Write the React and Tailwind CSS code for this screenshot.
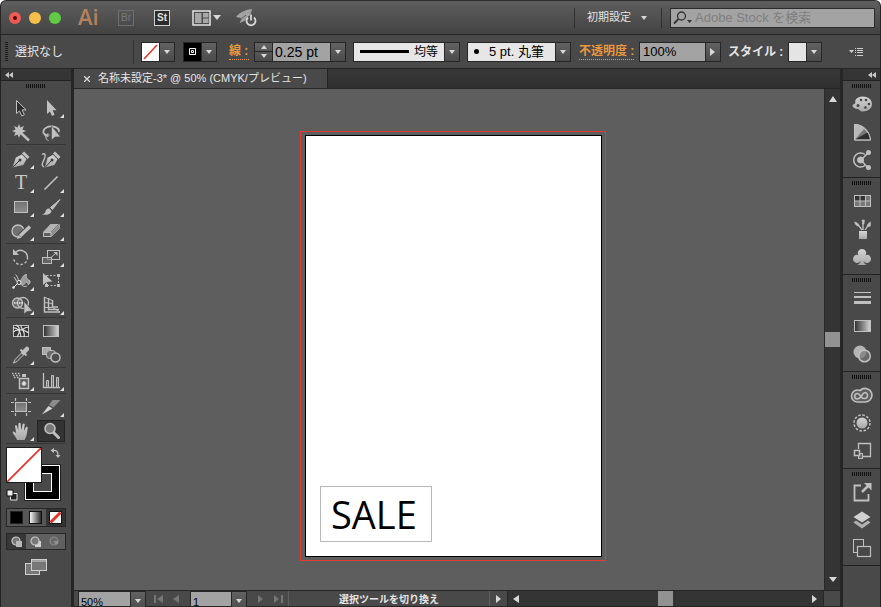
import clsx from "clsx";

const Shades = () => (
  <svg width="0" height="0" className="absolute" aria-hidden="true">
    <defs>
      <linearGradient id="fade">
        <stop offset="0" stopColor="#2e2e2e" />
        <stop offset="1" stopColor="#d6d6d6" />
      </linearGradient>
      <linearGradient id="fadeLight">
        <stop offset="0" stopColor="#ffffff" />
        <stop offset="1" stopColor="#222222" />
      </linearGradient>
      <linearGradient id="plate" x2="0" y2="1">
        <stop offset="0" stopColor="#727272" />
        <stop offset="1" stopColor="#8e8e8e" />
      </linearGradient>
      <linearGradient id="metal" x2="0" y2="1">
        <stop offset="0" stopColor="#d4d4d4" />
        <stop offset="1" stopColor="#a8a8a8" />
      </linearGradient>
    </defs>
  </svg>
);

const L = "#c0c0c0";

// every tool glyph is drawn on a 30x24 cell
const toolGroups = [
  [
    {
      name: "選択ツール",
      art: <path d="M10.500 4.500v13l3-2.600 2.200 5 2.600-1.200-2.200-4.800h4z" fill="#2c2c2c" />,
    },
    {
      name: "ダイレクト選択ツール",
      more: true,
      art: <path d="M11 4v14l3-2.600 2 4.600 2.600-1.200-2-4.500h4z" fill={L} stroke="none" />,
    },
    {
      name: "自動選択ツール",
      art: (
        <>
          <path d="M13 4l1.300 3.600L18 6l-1.600 3.600L20 11l-3.600 1.400L18 16l-3.600-1.600L13 18l-1.400-3.600L8 16l1.600-3.600L6 11l3.600-1.400L8 6l3.600 1.600z" fill={L} stroke="none" />
          <path d="M15.500 13.500l7.500 7" strokeWidth="2.400" />
        </>
      ),
    },
    {
      name: "なげなわツール",
      art: (
        <>
          <path d="M12 15.500c-3.500-.6-5-2.200-4.600-4.500C8 8 12 6 16.500 6.500S24 9.500 22.500 12" strokeWidth="1.800" />
          <path d="M9 14c-1 2 1 3.500 3 2.500s1-3-1-2.500M10 16.500c-.5 2 .5 3.500 2.500 4" />
          <path d="M15.500 6v14l3.500-3 5.500-.2z" fill={L} stroke="#444" strokeWidth="0.500" />
        </>
      ),
    },
  ],
  [
    {
      name: "ペンツール",
      more: true,
      art: (
        <>
          <path d="M6.500 20.500l3.300-10 6-3 4.700 4.800-3.200 5.700z" fill="url(#metal)" stroke="none" />
          <path d="M17 5.500l5.500 5.500" strokeWidth="3" />
          <path d="M7 20l6.500-6.500" stroke="#3a3a3a" />
          <circle cx="14" cy="13" r="1.500" fill="#3a3a3a" stroke="none" />
        </>
      ),
    },
    {
      name: "曲線ツール",
      art: (
        <>
          <path d="M9 20.500l2.500-9.800 5.500-3 4.500 4.600-3 5.700z" fill="url(#metal)" stroke="none" />
          <path d="M18 5.500l5.500 5.500" strokeWidth="3" />
          <path d="M9.500 20l6-6.500" stroke="#3a3a3a" />
          <circle cx="16" cy="13" r="1.500" fill="#3a3a3a" stroke="none" />
          <path d="M6 7.500c3-2 4 .5 2.500 4s-4 7-.5 8.500" strokeWidth="1.400" />
        </>
      ),
    },
    {
      name: "文字ツール",
      more: true,
      art: (
        <text x="15" y="18" textAnchor="middle" fill="#c8c8c8" stroke="none" className="font-['Liberation_Serif',serif] text-[20px]">
          T
        </text>
      ),
    },
    { name: "直線ツール", more: true, art: <path d="M8.500 18.500l13-13" strokeWidth="1.600" /> },
    {
      name: "長方形ツール",
      more: true,
      art: <rect x="8.500" y="6.500" width="13" height="11" fill="url(#plate)" />,
    },
    {
      name: "ブラシツール",
      more: true,
      art: (
        <>
          <path d="M24 4.500l-9.500 8 2 2z" fill={L} stroke={L} />
          <path d="M13.500 13.500c-2.500-.5-3.500 1-4 3-.5 1.500-1.500 2.500-3.500 3 4 1 9 0 9.500-3.500z" fill={L} stroke="none" />
        </>
      ),
    },
    {
      name: "Shaper ツール",
      more: true,
      art: (
        <>
          <circle cx="12" cy="12" r="6" fill="#707070" strokeWidth="1.400" />
          <path d="M13.500 17.500l9.500-9" stroke="#484848" strokeWidth="5.500" />
          <path d="M14 17l10-9.500" strokeWidth="3.400" />
          <path d="M11 20l1.500-4 2.800 2.800z" fill={L} stroke="none" />
        </>
      ),
    },
    {
      name: "消しゴムツール",
      more: true,
      art: (
        <>
          <path d="M14.500 5h8.500l-8 8H7z" fill="#b2b2b2" stroke="none" />
          <path d="M7.500 13.500h7.500v4H7.500z" fill="#5e5e5e" stroke={L} />
          <path d="M15.500 13.500L23.500 5.500v4l-8 8z" fill="#8d8d8d" stroke={L} strokeWidth="0.600" />
        </>
      ),
    },
  ],
  [
    {
      name: "回転ツール",
      more: true,
      art: (
        <>
          <path d="M9.500 7.500a7 7 0 0 1 12 4.500" strokeWidth="1.400" />
          <path d="M21.500 12a7 7 0 0 1-14 1" strokeWidth="1.400" strokeDasharray="2.500 2" />
          <path d="M7 4v6h6z" fill={L} stroke="none" />
        </>
      ),
    },
    {
      name: "拡大・縮小ツール",
      more: true,
      art: (
        <>
          <rect x="11.500" y="5.500" width="12" height="9" />
          <rect x="6.500" y="12.500" width="9" height="6" fill="#757575" fillOpacity="0.600" />
          <path d="M15 12.500l5-4.500" />
          <path d="M21.500 7v4L17.500 7z" fill={L} stroke="none" />
        </>
      ),
    },
    {
      name: "線幅ツール",
      more: true,
      art: (
        <>
          <path d="M9.500 5.500c2.500 2 2 4.500 4 7M8 8c2 3 2.500 5 5 5.500M13.500 12c3-1 3-6.500 7-6.500-1 3 1 5 3.500 6.500.5 2-1 3.500-2 3.500 0-2-1.500-3-2.500-1.500-1.500 2-4 2-6-.5z" fill="#999" />
          <path d="M7.500 18.500L12 14" stroke="#eeeeee" />
          <circle cx="7.500" cy="18.500" r="1.200" fill="#eee" stroke="none" />
          <circle cx="13" cy="13.500" r="2" fill="#444" stroke="#f0f0f0" />
          <path d="M14.500 15c1.500 2 4 3 6.500 2" />
        </>
      ),
    },
    {
      name: "自由変形ツール",
      art: (
        <>
          <rect x="10.500" y="6.500" width="12" height="10" strokeDasharray="2 1.500" />
          <path d="M21 5h3v3h-3zM21 15h3v3h-3zM9 15h3v3H9z" fill={L} stroke="none" />
          <path d="M7 4v12l3.500-3 6-.5z" fill={L} stroke="none" />
        </>
      ),
    },
    {
      name: "シェイプ形成ツール",
      more: true,
      art: (
        <>
          <circle cx="11.500" cy="10" r="5" fill="#6c6c6c" strokeWidth="1.300" />
          <circle cx="17" cy="10" r="5.500" strokeWidth="1.300" />
          <path d="M8 10h11" stroke="#eeeeee" strokeDasharray="1.500 1" strokeWidth="1.500" />
          <path d="M18 8.500V21l3-2.500 5.500-.5z" fill={L} stroke="#444" strokeWidth="0.500" />
        </>
      ),
    },
    {
      name: "遠近グリッドツール",
      more: true,
      art: (
        <>
          <path d="M8.500 4v15H24M12.500 5v11.500H23M16.500 7v7H22" strokeWidth="1.500" />
          <path d="M8 4l8.500 3.500M8 9.500l8.500 1M8 14.500h8.500L24 19" />
        </>
      ),
    },
  ],
  [
    {
      name: "メッシュツール",
      art: (
        <>
          <rect x="7.500" y="6.500" width="15" height="11" fill="#353535" />
          <path d="M10 6c4 2 5 6 1 12M7 13c5-4 10-3 16 1M15 6c-1 4 5 6 3 12M7 9c5-1 8 5 8 9M16 11c2-2 4-3 7-3" stroke="#dddddd" strokeWidth="1.200" />
        </>
      ),
    },
    {
      name: "グラデーションツール",
      art: <rect x="7.500" y="6.500" width="15" height="11" fill="url(#fade)" />,
    },
    {
      name: "スポイトツール",
      more: true,
      art: (
        <>
          <path d="M16.500 9L9 16.500 7.500 20l3.500-1.500 7.500-7.500" fill="#555" />
          <path d="M14.500 6.500l6 6" strokeWidth="2" />
          <path d="M17.500 9.500l3.500-3.500" strokeWidth="4.500" strokeLinecap="round" />
        </>
      ),
    },
    {
      name: "ブレンドツール",
      art: (
        <>
          <rect x="6.500" y="4.500" width="8" height="7" fill="#a8a8a8" />
          <rect x="10.500" y="7.500" width="9" height="8" rx="3" fill="#6a6a6a" />
          <circle cx="19.500" cy="14.500" r="4.500" fill="#4e4e4e" strokeWidth="1.500" />
        </>
      ),
    },
  ],
  [
    {
      name: "シンボルスプレーツール",
      more: true,
      art: (
        <>
          <rect x="13.500" y="9.500" width="9" height="10" fill="#5b5b5b" strokeWidth="1.500" />
          <path d="M16 5h4v3h-4z" fill={L} stroke="none" />
          <circle cx="18" cy="14.500" r="2" fill="#e0e0e0" />
          <path d="M6 4.500h8M7 6.500h7M8 8.500h5" strokeDasharray="1.500 1.500" strokeWidth="1.500" />
        </>
      ),
    },
    {
      name: "棒グラフツール",
      more: true,
      art: (
        <>
          <path d="M7.500 4v14.500H24" strokeWidth="1.300" />
          <path d="M10.500 11.500h2v7h-2zM15.500 6.500h2v12h-2zM20.500 8.500h2v10h-2z" fill="#777" />
        </>
      ),
    },
  ],
  [
    {
      name: "アートボードツール",
      art: (
        <>
          <rect x="9.500" y="7.500" width="11" height="9" fill="url(#plate)" />
          <path d="M9.500 3v3M20.500 3v3M9.500 18v3M20.500 18v3M5 7.500h3M22 7.500h3M5 16.500h3M22 16.500h3" strokeWidth="1.200" />
        </>
      ),
    },
    {
      name: "スライスツール",
      more: true,
      art: (
        <>
          <path d="M24.500 5h-8l-3.500 5 4.500 2.500z" fill="#8c8c8c" stroke="none" />
          <path d="M12.500 11l4 2.500L6 19.500z" fill="#d6d6d6" stroke="none" />
        </>
      ),
    },
    {
      name: "手のひらツール",
      more: true,
      art: (
        <path d="M11 21c-.5-2.500-4-5.500-4.500-8 1-1 2.500 0 3.700 1.500L9 7c.5-1.200 1.700-1 2 0l1.300 4.500.2-7c.6-1 1.800-1 2.100 0l.6 6.700 1.500-6c.6-1 1.800-.7 2 .3l-.8 6.600L20 8c.8-.8 1.800-.2 1.700.8-.5 3.700-.7 8.700-3.200 12.200z" fill="url(#metal)" stroke="none" />
      ),
    },
    {
      name: "ズームツール",
      active: true,
      art: (
        <>
          <path d="M17 13l5.500 5.500" strokeWidth="3" strokeLinecap="round" />
          <circle cx="14" cy="9.500" r="5" fill="#777" strokeWidth="1.600" />
        </>
      ),
    },
  ],
];

// 28x28 glyphs
const panelGroups = [
  [
    {
      name: "カラー",
      art: (
        <>
          <path d="M14.500 6.500c5.500 0 9.500 3 9.500 7.500s-4 7.500-9.500 7.500c-3 0-3-2.500-5-2.500s-4.500-1-5-3c-.3-1.500 1.500-2 2.500-2.500s-.5-2 .5-3.500c1-2 4-3.500 7-3.500z" fill="url(#metal)" stroke="none" />
          <circle cx="13" cy="10" r="1.300" fill="#444" stroke="none" />
          <circle cx="18" cy="10" r="1.300" fill="#444" stroke="none" />
          <circle cx="21" cy="14" r="1.300" fill="#444" stroke="none" />
          <circle cx="17.500" cy="17.500" r="1.300" fill="#444" stroke="none" />
          <circle cx="10" cy="15.500" r="1.500" fill="#444" stroke="none" />
        </>
      ),
    },
    {
      name: "カラーガイド",
      art: (
        <>
          <path d="M6.500 6.500c9 0 15 7 16 15.500h-16z" fill="#b8b8b8" />
          <path d="M7 21.500L16 11c3 2.500 5 6 6 10.500z" fill="#777" stroke="none" />
          <path d="M7 21.500l12.500-7c1.500 2 2.500 4.500 2.500 7z" fill="#2e2e2e" stroke="none" />
          <path d="M6.500 6.500c9 0 15 7 16 15.500h-16z" />
        </>
      ),
    },
    {
      name: "アセット共有",
      art: (
        <>
          <path d="M17 8.500a7 7 0 1 0 0 11" strokeWidth="1.500" />
          <circle cx="12.500" cy="14" r="3" fill={L} />
          <path d="M20 7l-7 7 7 8" strokeWidth="1.500" />
          <circle cx="20.500" cy="6.500" r="2.500" fill={L} stroke="none" />
          <circle cx="20.500" cy="21.500" r="2.500" fill={L} stroke="none" />
        </>
      ),
    },
  ],
  [
    {
      name: "スウォッチ",
      art: (
        <>
          <path d="M6 8h17v12H6z" fill={L} stroke="none" />
          <path d="M7 9h4.500v4.500H7zM12.500 9H17v4.500h-4.500z" fill="#333" stroke="none" />
          <path d="M18 9h4v4.500h-4zM7 14.500h4.500V19H7zM12.500 14.500H17V19h-4.500zM18 14.500h4V19h-4z" fill="#777" stroke="none" />
        </>
      ),
    },
    {
      name: "ブラシ",
      art: (
        <>
          <path d="M11 16h8v8h-8z" fill="url(#metal)" stroke="none" />
          <path d="M14 15L9.500 9M15 15V8M17 15l3.500-5" strokeWidth="1.300" />
          <path d="M6.500 7c2 0 4 1.500 4.500 4-2 .5-4-1.500-4.500-4zM14 5h2.500l-.5 4h-1.500zM22.500 7v4l-3.500 1c0-2.500 1.500-4 3.500-5z" fill={L} strokeWidth="0.500" />
        </>
      ),
    },
    {
      name: "シンボル",
      art: (
        <path d="M14 6a4 4 0 0 1 3.500 6.200A4 4 0 1 1 15.500 18c.3 2 1.500 3.500 3.500 4H9c2-.5 3.200-2 3.500-4a4 4 0 1 1-2-5.800A4 4 0 0 1 14 6z" fill="url(#metal)" stroke="none" />
      ),
    },
  ],
  [
    {
      name: "線",
      art: <path d="M6 8h17v1H6zM6 12h17v2H6zM6 17h17v3H6z" fill={L} stroke="none" />,
    },
    {
      name: "グラデーション",
      art: <rect x="6.500" y="8.500" width="16" height="11" fill="url(#fade)" />,
    },
    {
      name: "透明",
      art: (
        <>
          <circle cx="12" cy="12" r="6.500" fill="#b5b5b5" stroke="none" />
          <circle cx="16.500" cy="16" r="5.800" fill="#777" fillOpacity="0.700" strokeWidth="1.500" />
        </>
      ),
    },
  ],
  [
    {
      name: "CC ライブラリ",
      art: (
        <>
          <path d="M9.500 21a6 6 0 0 1 0-12c1 0 1.800.2 2.500.6A7 7 0 0 1 24 14c0 4-3 7-7 7z" fill="#5e5e5e" strokeWidth="1.600" />
          <path d="M17.500 17.500h-2c-2 0-3.500-5-6-5a2.700 2.700 0 0 0 0 5.500c1.500 0 2.500-1 3.500-2.500 1.300-2 2-4 4.500-4a3.200 3.200 0 0 1 0 6z" strokeWidth="1.600" />
        </>
      ),
    },
    {
      name: "アピアランス",
      art: (
        <>
          <circle cx="14" cy="14" r="5.500" fill="url(#metal)" stroke="none" />
          <circle cx="14" cy="14" r="8" strokeDasharray="2.500 1.700" strokeWidth="1.500" />
        </>
      ),
    },
    {
      name: "グラフィックスタイル",
      art: (
        <>
          <path d="M10.500 12V6.500h12v13H15" strokeWidth="1.300" />
          <rect x="10.500" y="16.500" width="4" height="5" fill="#666" />
          <rect x="6.500" y="13.500" width="5" height="5" fill="#444" strokeWidth="1.500" />
        </>
      ),
    },
  ],
  [
    {
      name: "書き出し",
      art: (
        <>
          <path d="M13 7.500H6.500v15h14V16" strokeWidth="1.800" />
          <path d="M14 14l6-6" strokeWidth="2.500" />
          <path d="M16 5h7.500v7.500z" fill={L} stroke="none" />
        </>
      ),
    },
    {
      name: "レイヤー",
      art: (
        <>
          <path d="M14 5.500l8.500 5.500-8.500 5.500L5.500 11z" fill="#d0d0d0" stroke="none" />
          <path d="M8 14.500L5.500 16.500 14 22.500l8.500-6-2.500-2-6 4z" fill="#b0b0b0" stroke="none" />
        </>
      ),
    },
    {
      name: "アートボード",
      art: (
        <>
          <rect x="5.500" y="5.500" width="10" height="13" />
          <rect x="9.500" y="12.500" width="13" height="10" fill="#484848" strokeWidth="1.200" />
        </>
      ),
    },
  ],
];

const Triangle = ({ dir = "down", className = "fill-[#d8d8d8]" }) => {
  const paths = {
    down: "M0 1h8L4 6z",
    up: "M0 7h8L4 1z",
    left: "M7 0v8L1 4z",
    right: "M1 0v8l5-4z",
  };
  return (
    <svg width="8" height="8" viewBox="0 0 8 8" className={className} aria-hidden="true">
      <path d={paths[dir]} />
    </svg>
  );
};

const SmallTriangle = () => (
  <svg width="6" height="4" viewBox="0 0 6 4" className="fill-[#d8d8d8]" aria-hidden="true">
    <path d="M0 0h6L3 4z" />
  </svg>
);

const Collapse = () => (
  <button type="button" aria-label="パネルを折りたたむ" className="flex h-3 items-center px-1">
    <svg width="8" height="6" viewBox="0 0 8 6" fill="#c8c8c8">
      <path d="M4 0v6L0 3zM8 0v6L4 3z" />
    </svg>
  </button>
);

const Grip = () => (
  <svg width="20" height="4" viewBox="0 0 20 4" className="mx-auto" aria-hidden="true">
    <path d="M0 2h20" stroke="#101010" strokeWidth="4" strokeDasharray="1 1" />
  </svg>
);

// a select with its arrow button laid on the right end
const Dropdown = ({ label, options, className, children }) => (
  <div className={clsx("grid shrink-0 border border-[#262626]", className)}>
    <select aria-label={label} className="min-w-0 appearance-none border-0 bg-transparent pr-4 pl-0.5 leading-4 text-black outline-none [grid-area:1/1]">
      {options.map((option) => (
        <option key={option}>{option}</option>
      ))}
    </select>
    {children}
    <span className="pointer-events-none flex w-[15px] items-center justify-center justify-self-end border-l border-[#262626] bg-linear-to-b from-[#626262] to-[#4b4b4b] [grid-area:1/1]">
      <SmallTriangle />
    </span>
  </div>
);

const SwatchButton = ({ label, children }) => (
  <button type="button" aria-label={label} className="flex h-5 w-[34px] shrink-0 border border-[#262626]">
    {children}
    <span className="flex h-full flex-1 items-center justify-center border-l border-[#262626] bg-linear-to-b from-[#626262] to-[#4b4b4b]">
      <SmallTriangle />
    </span>
  </button>
);

const AppBar = () => (
  <header className="flex h-[35px] shrink-0 items-center rounded-t-md border-x border-t border-b border-[#262626] border-t-[#2e2e2e] bg-linear-to-b from-[#5e5e5e] to-[#434343] pr-[5px] pl-2">
    <div className="flex gap-2">
      <button type="button" aria-label="閉じる" className="flex size-3 items-center justify-center rounded-full bg-[#ee5a54]">
        <span className="size-1 rounded-full bg-[#4f0a08]" />
      </button>
      <button type="button" aria-label="しまう" className="size-3 rounded-full bg-[#f6be4a]" />
      <button type="button" aria-label="拡大" className="size-3 rounded-full bg-[#62cb46]" />
    </div>
    <h1 className="ml-[17px] w-6 pb-1 font-['Open_Sans',sans-serif] text-[22px] leading-6 font-semibold text-[#b5815c]">Ai</h1>
    <button type="button" className="ml-4 size-4 border border-[#6e6e6e] text-[10px] leading-3 text-[#787878]">Br</button>
    <button type="button" className="ml-5 size-4 border border-[#d0d0d0] bg-[#2b2b2b] text-[10px] leading-3 font-bold text-[#e0e0e0]">St</button>
    <button type="button" aria-label="ドキュメントレイアウト" className="ml-[22px] flex items-center gap-0.5">
      <svg width="19" height="16" viewBox="0 0 19 16">
        <path d="M1 1h17v14H1z" fill="#4c4c4c" stroke="#e2e2e2" strokeWidth="1.500" />
        <path d="M3 3h6.500v10H3zM11 3h5.500v4.500H11zM11 8.500h5.500V13H11z" fill="#a8a8a8" />
      </svg>
      <Triangle />
    </button>
    <button type="button" aria-label="GPU プレビュー" className="ml-3.5">
      <svg width="24" height="20" viewBox="0 0 24 20">
        <path d="M1 9c3-4 8-7 16-8-1 7-6 12-12 14l1-5z" fill="#a3a3a3" />
        <path d="M3 16c2-4 4-6 8-9" stroke="#555" fill="none" />
        <circle cx="16" cy="13" r="5.500" fill="#505050" />
        <path d="M13 9.500a4.500 4.500 0 1 0 6 0M16 6.500v6" stroke="#d5d5d5" strokeWidth="1.800" fill="none" />
      </svg>
    </button>
    <div className="ml-auto flex items-center">
      <button type="button" className="flex h-5 items-center gap-2.5 border-l border-[#303030] pr-3.5 pl-3 text-[11px] text-[#e4e4e4]">
        初期設定
        <SmallTriangle />
      </button>
      <div className="h-5 border-l border-[#303030] pl-2">
        <label className="flex h-5 w-[205px] items-center border border-[#2b2b2b] bg-[#a3a3a3] pl-0.5">
          <svg width="20" height="14" viewBox="0 0 20 14" fill="none" stroke="#333" strokeWidth="1.300">
            <circle cx="8.500" cy="5" r="4" />
            <path d="M5.500 8L1 12.500" strokeWidth="1.800" />
            <path d="M14 9h5l-2.500 3z" fill="#333" stroke="none" />
          </svg>
          <input type="search" aria-label="Adobe Stock を検索" placeholder="Adobe Stock を検索" className="ml-0.5 min-w-0 flex-1 bg-transparent text-[13px] leading-4 outline-none placeholder:text-[#7f7f7f]" />
        </label>
      </div>
    </div>
  </header>
);

const ControlBar = () => (
  <div className="flex h-[34px] shrink-0 items-center border-x border-b border-[#262626] bg-[#494949] pl-1 text-[12px] text-[#e6e6e6]">
    <svg width="3" height="20" viewBox="0 0 3 20" aria-hidden="true">
      <path d="M1.500 0v20" stroke="#1c1c1c" strokeWidth="3" strokeDasharray="1 1" />
    </svg>
    <span className="ml-[7px] w-[118px]">選択なし</span>
    <div className="flex items-center gap-2 border-l border-[#333] py-0.5 pl-[7px]">
      <SwatchButton label="塗り">
        <svg width="17" height="18" viewBox="0 0 17 18">
          <path d="M0 0h17v18H0z" fill="#fff" />
          <path d="M2 16L15 2" stroke="#e8332a" strokeWidth="1.600" />
        </svg>
      </SwatchButton>
      <SwatchButton label="線のカラー">
        <svg width="17" height="18" viewBox="0 0 17 18">
          <path d="M0 0h17v18H0z" />
          <path d="M5.500 5.500h6v6h-6zM7.500 7.500h2v2h-2z" stroke="#fff" fill="none" />
        </svg>
      </SwatchButton>
    </div>
    <a href="#stroke" className="ml-3 w-5 border-b border-dotted border-[#e8983e] leading-4 font-bold whitespace-nowrap text-[#e8983e]">線 :</a>
    <div className="ml-[5px] flex">
      <div className="flex h-5 w-[18px] flex-col border border-r-0 border-[#262626] bg-linear-to-b from-[#626262] to-[#4b4b4b]">
        <button type="button" aria-label="線幅を上げる" className="flex flex-1 items-center justify-center border-b border-[#262626]">
          <svg width="6" height="4" fill="#d8d8d8"><path d="M0 4h6L3 0z" /></svg>
        </button>
        <button type="button" aria-label="線幅を下げる" className="flex flex-1 items-center justify-center">
          <SmallTriangle />
        </button>
      </div>
      <Dropdown label="線幅" options={["0.25 pt", "1 pt"]} className="h-5 w-[74px] bg-[#a3a3a3] text-[14px]" />
    </div>
    <Dropdown label="可変線幅プロファイル" options={["均等"]} className="ml-[7px] h-5 w-[107px] bg-[#e6e6e6] text-[12px] [&>select]:pl-[60px]">
      <span className="pointer-events-none ml-1.5 h-[3px] w-[49px] self-center bg-black [grid-area:1/1]" />
    </Dropdown>
    <Dropdown label="ブラシ定義" options={["5 pt. 丸筆"]} className="ml-[7px] h-5 w-[104px] bg-[#e6e6e6] text-[13px] [&>select]:pl-[21px]">
      <span className="pointer-events-none ml-1.5 size-[5px] self-center rounded-full bg-black [grid-area:1/1]" />
    </Dropdown>
    <a href="#opacity" className="ml-2 w-[55px] border-b border-dotted border-[#e8983e] leading-4 font-bold whitespace-nowrap text-[#e8983e]">不透明度 :</a>
    <div className="ml-[5px] flex h-5 w-[82px] shrink-0 border border-[#262626]">
      <input aria-label="不透明度" defaultValue="100%" className="min-w-0 flex-1 bg-[#a3a3a3] pl-[3px] text-[13px] text-black outline-none" />
      <button type="button" aria-label="不透明度スライダー" className="flex w-[15px] items-center justify-center border-l border-[#262626] bg-linear-to-b from-[#626262] to-[#4b4b4b]">
        <Triangle dir="right" />
      </button>
    </div>
    <span className="ml-[7px] w-[55px] font-bold whitespace-nowrap">スタイル :</span>
    <div className="ml-[5px]">
      <SwatchButton label="グラフィックスタイル">
        <span className="h-full w-[17px] bg-[#e4e4e4]" />
      </SwatchButton>
    </div>
    <button type="button" aria-label="コントロールメニュー" className="mr-4 ml-auto">
      <svg width="15" height="10" viewBox="0 0 15 10" fill="#d0d0d0">
        <path d="M0 3h5L2.500 6zM6 1h1v1H6zM6 3h1v1H6zM6 5h1v1H6zM6 8h1v1H6zM8 1h6v1H8zM8 3h6v1H8zM8 5h6v1H8zM8 8h6v1H8z" />
      </svg>
    </button>
  </div>
);

const ToolPanel = () => (
  <aside aria-label="ツール" className="flex w-[71px] shrink-0 flex-col border-l border-[#222] bg-[#494949]">
    <div className="h-3 shrink-0 border-b border-[#222] bg-[#353535]">
      <Collapse />
    </div>
    <div className="pt-[3px] pb-2">
      <Grip />
    </div>
    <div className="ml-[5px] w-[60px]">
      {toolGroups.map((tools, i) => (
        <div key={i} className="mb-px grid grid-cols-2 border-b border-[#363636] first:mb-0.5">
          {tools.map((tool) => (
            <button
              key={tool.name}
              type="button"
              aria-label={tool.name}
              aria-pressed={!!tool.active}
              className="h-6 w-[30px]"
            >
              <svg width="30" height="24" viewBox="0 0 30 24" fill="none" stroke={L}>
                {tool.active && <rect x="1.500" y="1.500" width="27" height="21" fill="#333" stroke="#242424" />}
                {tool.art}
                {tool.more && <path d="M28 18v4h-4z" fill="#e0e0e0" stroke="none" />}
              </svg>
            </button>
          ))}
        </div>
      ))}
      <div className="relative h-[58px]">
        <button type="button" aria-label="線" className="absolute top-5 left-[19px] size-[35px] border border-white bg-black p-[7px] outline outline-[#222]">
          <span className="block size-full border border-white bg-[#494949]" />
        </button>
        <button type="button" aria-label="塗り" className="absolute top-0.5 left-0 size-9 border border-[#1c1c1c] bg-white">
          <svg width="34" height="34" viewBox="0 0 34 34">
            <path d="M0 34L34 0" stroke="#e8332a" strokeWidth="1.800" />
          </svg>
        </button>
        <button type="button" aria-label="塗りと線を入れ替え" className="absolute top-0.5 left-11">
          <svg width="11" height="12" viewBox="0 0 11 12" fill={L}>
            <path d="M3 3.500c3.500-.5 5 1 5 4.500" stroke={L} strokeWidth="1.300" fill="none" />
            <path d="M4 1v5L0.500 3.500zM5.500 8h5L8 11z" />
          </svg>
        </button>
        <button type="button" aria-label="初期設定の塗りと線" className="absolute top-11 left-0">
          <svg width="12" height="12" viewBox="0 0 12 12">
            <path d="M4.500 4.500h6.500v6.500H4.500z" fill="#222" stroke="#e0e0e0" />
            <path d="M1 1h6v6H1z" fill="#eee" stroke="#111" />
          </svg>
        </button>
      </div>
      <div className="mt-[5px] grid h-[19px] grid-cols-3 border border-[#262626] bg-[#565656]">
        <button type="button" aria-label="カラー" className="flex items-center justify-center">
          <span className="size-[13px] border border-[#222] bg-black" />
        </button>
        <button type="button" aria-label="グラデーション" className="flex items-center justify-center">
          <svg width="13" height="13">
            <rect x="0.500" y="0.500" width="12" height="12" fill="url(#fadeLight)" stroke="#111" />
          </svg>
        </button>
        <button type="button" aria-label="なし" className="flex items-center justify-center bg-[#333]">
          <svg width="13" height="13">
            <rect x="0.500" y="0.500" width="12" height="12" fill="#fff" stroke="#111" />
            <path d="M1.500 11.500l10-10" stroke="#e8332a" strokeWidth="3" />
          </svg>
        </button>
      </div>
      <div className="mt-1.5 grid h-[17px] grid-cols-3 border border-[#262626] bg-[#606060]">
        {["標準描画", "背面描画", "内側描画"].map((mode, i) => (
          <button
            key={mode}
            type="button"
            aria-label={mode}
            className={clsx("flex items-center justify-center", i === 0 && "bg-[#383838]", i === 2 && "opacity-40")}
          >
            <svg width="12" height="12" viewBox="0 0 12 12">
              {i === 1 && <path d="M5 5h6v6H5z" fill="#d0d0d0" />}
              <circle cx="5" cy="5" r="4" fill="#777" stroke="#c8c8c8" strokeWidth="1.200" />
              {i === 0 && <path d="M5 5h6v6H5z" fill="#b8b8b8" />}
              {i === 2 && <path d="M5 5h4v3L6 8.500z" fill="#ddd" />}
            </svg>
          </button>
        ))}
      </div>
      <button type="button" aria-label="スクリーンモードを変更" className="mx-auto mt-[9px] block">
        <svg width="22" height="16" viewBox="0 0 22 16" stroke="#cfcfcf">
          <rect x="0.500" y="4.500" width="14" height="11" fill="#777" />
          <rect x="6.500" y="0.500" width="15" height="11" fill="#777" />
          <path d="M7 2h14" />
        </svg>
      </button>
    </div>
  </aside>
);

const Artboard = () => (
  <div className="relative min-h-0 flex-1 overflow-hidden bg-[#5e5e5e]">
    <div className="absolute top-[42px] left-[226px] border border-[#e23a30] py-[3px] pr-[3px] pl-1">
      <div className="relative h-[422px] w-[297px] border border-black bg-white">
        <p className="absolute top-[350px] left-3.5 flex h-14 w-28 items-center border border-[#b8b8b8] pl-2.5 font-['Open_Sans',sans-serif] text-[38px] leading-none text-black">
          SALE
        </p>
      </div>
    </div>
  </div>
);

const StatusBar = () => (
  <footer className="flex h-[17px] shrink-0 border-t border-b border-[#262626] bg-[#494949]">
    <div className="flex w-[433px] shrink-0 items-center pl-1">
      <Dropdown label="ズーム" options={["50%", "100%"]} className="h-4 w-[68px] bg-[#a3a3a3] text-[11px] [&>select]:pt-0.5" />
      <div className="ml-2 flex w-9 gap-2">
        <button type="button" disabled aria-label="最初" className="flex items-center">
          <span className="h-2 w-0.5 bg-[#757575]" />
          <Triangle dir="left" className="fill-[#757575]" />
        </button>
        <button type="button" disabled aria-label="前へ"><Triangle dir="left" className="fill-[#757575]" /></button>
      </div>
      <Dropdown label="アートボード" options={["1"]} className="h-4 w-[57px] bg-[#a3a3a3] text-[11px] [&>select]:pt-0.5" />
      <div className="ml-2.5 flex w-[31px] gap-2">
        <button type="button" disabled aria-label="次へ"><Triangle dir="right" className="fill-[#757575]" /></button>
        <button type="button" disabled aria-label="最後" className="flex items-center">
          <Triangle dir="right" className="fill-[#757575]" />
          <span className="h-2 w-0.5 bg-[#757575]" />
        </button>
      </div>
      <span className="h-full flex-1 border-l border-[#606060] text-center text-[10px] leading-[18px] font-bold text-[#e6e6e6]">
        選択ツールを切り換え
      </span>
      <button type="button" aria-label="ステータス表示" className="flex h-full w-[18px] items-center justify-center border-l border-[#606060]">
        <Triangle dir="right" />
      </button>
    </div>
    <div className="flex flex-1 items-center justify-between border-x border-[#262626] bg-[#343434] px-1">
      <button type="button" aria-label="左へスクロール"><Triangle dir="left" /></button>
      <span className="h-full w-[15px] bg-[#929292]" />
      <button type="button" aria-label="右へスクロール"><Triangle dir="right" /></button>
    </div>
    <span className="w-4 bg-[#494949]" />
  </footer>
);

const DocumentWindow = () => (
  <main className="flex min-w-0 flex-1 flex-col">
    <div className="flex h-5 shrink-0 border-b border-[#262626] bg-linear-to-b from-[#383838] to-[#2f2f2f]">
      <div className="flex w-[254px] items-center border-r border-[#222] bg-[#494949] pl-2.5 text-[11px] whitespace-nowrap text-[#e6e6e6]">
        <button type="button" aria-label="タブを閉じる" className="mr-2">
          <svg width="6" height="6" viewBox="0 0 6 6" stroke="#d8d8d8" strokeWidth="1.300">
            <path d="M0 0l6 6M6 0L0 6" />
          </svg>
        </button>
        名称未設定-3* @ 50% (CMYK/プレビュー)
      </div>
    </div>
    <div className="flex min-h-0 flex-1">
      <Artboard />
      <div className="flex w-4 flex-col items-center justify-between border-l border-[#2a2a2a] bg-[#343434] py-1.5">
        <button type="button" aria-label="上へスクロール"><Triangle dir="up" /></button>
        <span className="h-[15px] w-full bg-[#929292]" />
        <button type="button" aria-label="下へスクロール"><Triangle /></button>
      </div>
    </div>
    <StatusBar />
  </main>
);

const PanelDock = () => (
  <aside aria-label="パネル" className="w-[38px] shrink-0 border-r border-[#222] bg-[#494949]">
    <div className="flex h-[11px] items-center justify-end bg-[#353535]">
      <Collapse />
    </div>
    {panelGroups.map((panels, i) => (
      <div key={i} className="h-[97px] border-t border-[#222] pt-[3px]">
        <Grip />
        <div className="mt-0.5 flex flex-col items-center">
          {panels.map((panel) => (
            <button key={panel.name} type="button" aria-label={panel.name} className="size-7">
              <svg width="28" height="28" viewBox="0 0 28 28" fill="none" stroke={L}>
                {panel.art}
              </svg>
            </button>
          ))}
        </div>
      </div>
    ))}
    <div className="border-t border-[#222]" />
  </aside>
);

export default function App() {
  return (
    <div className="flex h-screen flex-col overflow-hidden bg-white font-['Liberation_Sans','Noto_Sans_CJK_JP',sans-serif]">
      <Shades />
      <AppBar />
      <ControlBar />
      <div className="flex min-h-0 flex-1 gap-[3px] bg-[#262626]">
        <ToolPanel />
        <DocumentWindow />
        <PanelDock />
      </div>
    </div>
  );
}
